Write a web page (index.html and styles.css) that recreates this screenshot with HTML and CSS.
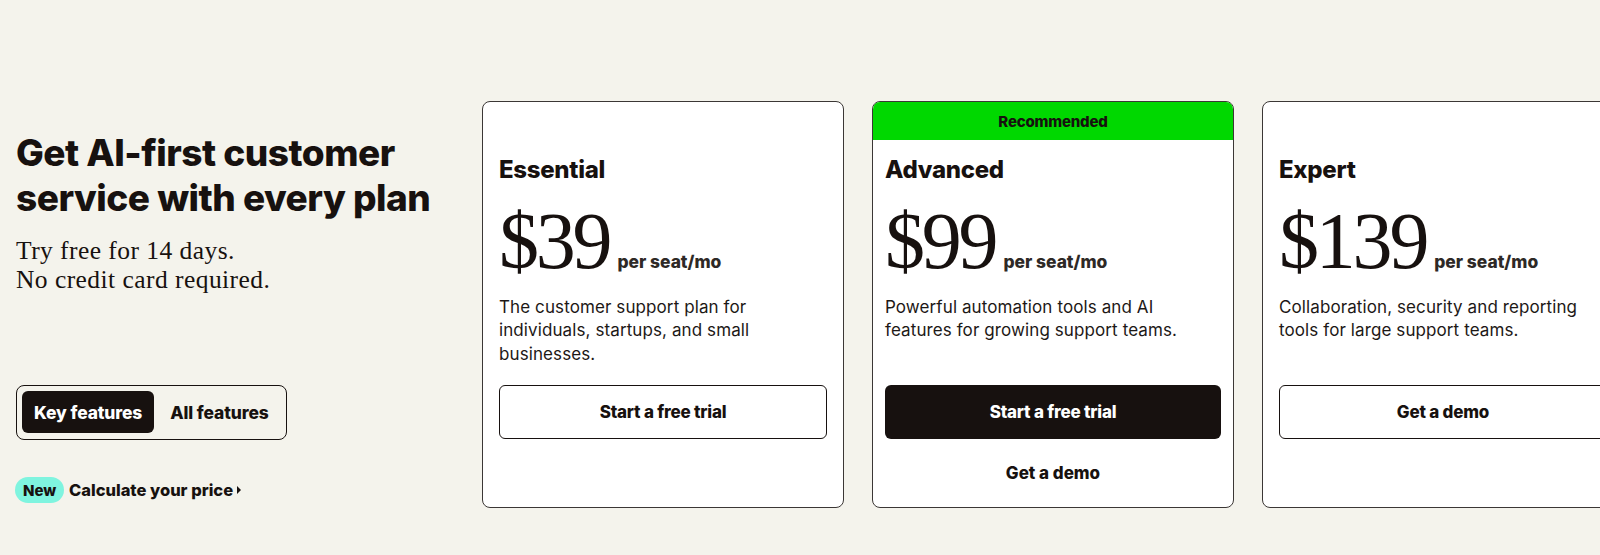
FILE: index.html
```html
<!DOCTYPE html>
<html lang="en">
<head>
<meta charset="utf-8">
<title>Pricing</title>
<link rel="stylesheet" href="styles.css">
</head>
<body>
<main class="page">
  <section class="intro">
    <h1 class="headline">Get AI-first customer service with every plan</h1>
    <p class="sub">Try free for 14 days.<br>No credit card required.</p>
    <div class="toggle">
      <button class="tog tog-active">Key features</button>
      <button class="tog">All features</button>
    </div>
    <a class="calc" href="#"><span class="badge">New</span><span class="calc-text">Calculate your price</span><span class="caret"></span></a>
  </section>

  <section class="cards">
    <article class="card">
      <div class="card-head"></div>
      <div class="card-body">
        <h2 class="plan">Essential</h2>
        <div class="price"><span class="amount">$39</span><span class="per">per seat/mo</span></div>
        <p class="desc">The customer support plan for individuals, startups, and small businesses.</p>
        <a class="btn btn-outline" href="#">Start a free trial</a>
      </div>
    </article>

    <article class="card card-rec">
      <div class="card-head">Recommended</div>
      <div class="card-body">
        <h2 class="plan">Advanced</h2>
        <div class="price"><span class="amount">$99</span><span class="per">per seat/mo</span></div>
        <p class="desc">Powerful automation tools and AI features for growing support teams.</p>
        <a class="btn btn-dark" href="#">Start a free trial</a>
        <a class="link" href="#">Get a demo</a>
      </div>
    </article>

    <article class="card">
      <div class="card-head"></div>
      <div class="card-body">
        <h2 class="plan">Expert</h2>
        <div class="price"><span class="amount">$139</span><span class="per">per seat/mo</span></div>
        <p class="desc">Collaboration, security and reporting tools for large support teams.</p>
        <a class="btn btn-outline" href="#">Get a demo</a>
      </div>
    </article>
  </section>
</main>
</body>
</html>
```

FILE: styles.css
```css
* { box-sizing: border-box; }

html, body {
  margin: 0;
  padding: 0;
  background: #f4f3ec;
  color: #17110f;
  font-family: Inter, "Liberation Sans", sans-serif;
  overflow: hidden;
}

.page {
  display: flex;
  align-items: flex-start;
  padding: 101px 0 0 16px;
  width: 1700px;
  height: 555px;
}

.intro {
  width: 438px;
  flex-shrink: 0;
  margin-right: 28px;
  padding-top: 29px;
  display: flex;
  flex-direction: column;
  align-items: flex-start;
}

.headline {
  margin: 0;
  font-size: 37px;
  line-height: 45px;
  font-weight: 800;
  letter-spacing: -0.5px;
  width: 438px;
}

.sub {
  margin: 16px 0 0;
  font-family: "Liberation Serif", serif;
  font-size: 25.5px;
  line-height: 29px;
  font-weight: 400;
  letter-spacing: 0.45px;
}

.toggle {
  margin-top: 91px;
  display: flex;
  gap: 4px;
  padding: 5px;
  border: 1.5px solid #17110f;
  border-radius: 8px;
  height: 55px;
}

.tog {
  flex-shrink: 0;
  white-space: nowrap;
  border: 0;
  background: transparent;
  font-family: Inter, "Liberation Sans", sans-serif;
  font-weight: 800;
  font-size: 17.4px;
  letter-spacing: -0.1px;
  color: #17110f;
  padding: 0 12px;
  border-radius: 6px;
  height: 42px;
}

.tog-active {
  background: #17110f;
  color: #fff;
}

.calc {
  margin-top: 37px;
  display: flex;
  align-items: center;
  text-decoration: none;
  color: #17110f;
  margin-left: -1px;
}

.badge {
  background: #7ff4df;
  border-radius: 13px;
  height: 26px;
  width: 49px;
  display: flex;
  align-items: center;
  justify-content: center;
  font-weight: 800;
  font-size: 15px;
  letter-spacing: -0.1px;
}

.calc-text {
  margin-left: 5px;
  font-weight: 800;
  font-size: 16.5px;
  letter-spacing: 0;
}

.caret {
  margin-left: 4px;
  width: 0;
  height: 0;
  border-top: 4px solid transparent;
  border-bottom: 4px solid transparent;
  border-left: 4px solid #17110f;
}

.cards {
  display: flex;
  gap: 28px;
  flex-shrink: 0;
}

.card {
  width: 362px;
  height: 407px;
  flex-shrink: 0;
  background: #fff;
  border: 1px solid #3b3735;
  border-radius: 8px;
  overflow: hidden;
  display: flex;
  flex-direction: column;
}

.card-head {
  height: 38px;
  flex-shrink: 0;
  display: flex;
  align-items: center;
  justify-content: center;
  font-weight: 800;
  font-size: 15px;
  letter-spacing: -0.2px;
}

.card-rec .card-head {
  background: #00d800;
}

.card-body {
  padding: 0 16px 16px;
  display: flex;
  flex-direction: column;
}

.card-rec .card-body {
  padding: 0 12px 16px;
}

.plan {
  margin: 15px 0 0;
  font-size: 24px;
  line-height: 30px;
  font-weight: 800;
  letter-spacing: -0.3px;
}

.price {
  margin-top: 16px;
  display: flex;
  align-items: baseline;
  height: 80px;
}

.amount {
  font-family: "Liberation Serif", serif;
  font-size: 80px;
  line-height: 80px;
  letter-spacing: -3.2px;
}

.per {
  margin-left: 8px;
  font-weight: 800;
  font-size: 17.4px;
  letter-spacing: 0;
  color: #2e2926;
}

.desc {
  margin: 15px 0 0;
  font-size: 17px;
  line-height: 23.4px;
  height: 70px;
  max-width: 330px;
  letter-spacing: 0.1px;
  color: #1d1816;
}

.btn {
  margin-top: 19px;
  height: 54px;
  border-radius: 6px;
  display: flex;
  align-items: center;
  justify-content: center;
  font-weight: 800;
  font-size: 17px;
  letter-spacing: -0.2px;
  text-decoration: none;
}

.btn-outline {
  border: 1.5px solid #17110f;
  color: #17110f;
  background: #fff;
}

.btn-dark {
  background: #17110f;
  color: #fff;
}

.link {
  margin-top: 22px;
  text-align: center;
  font-weight: 800;
  font-size: 17px;
  line-height: 24px;
  letter-spacing: 0;
  color: #17110f;
  text-decoration: none;
}
```
